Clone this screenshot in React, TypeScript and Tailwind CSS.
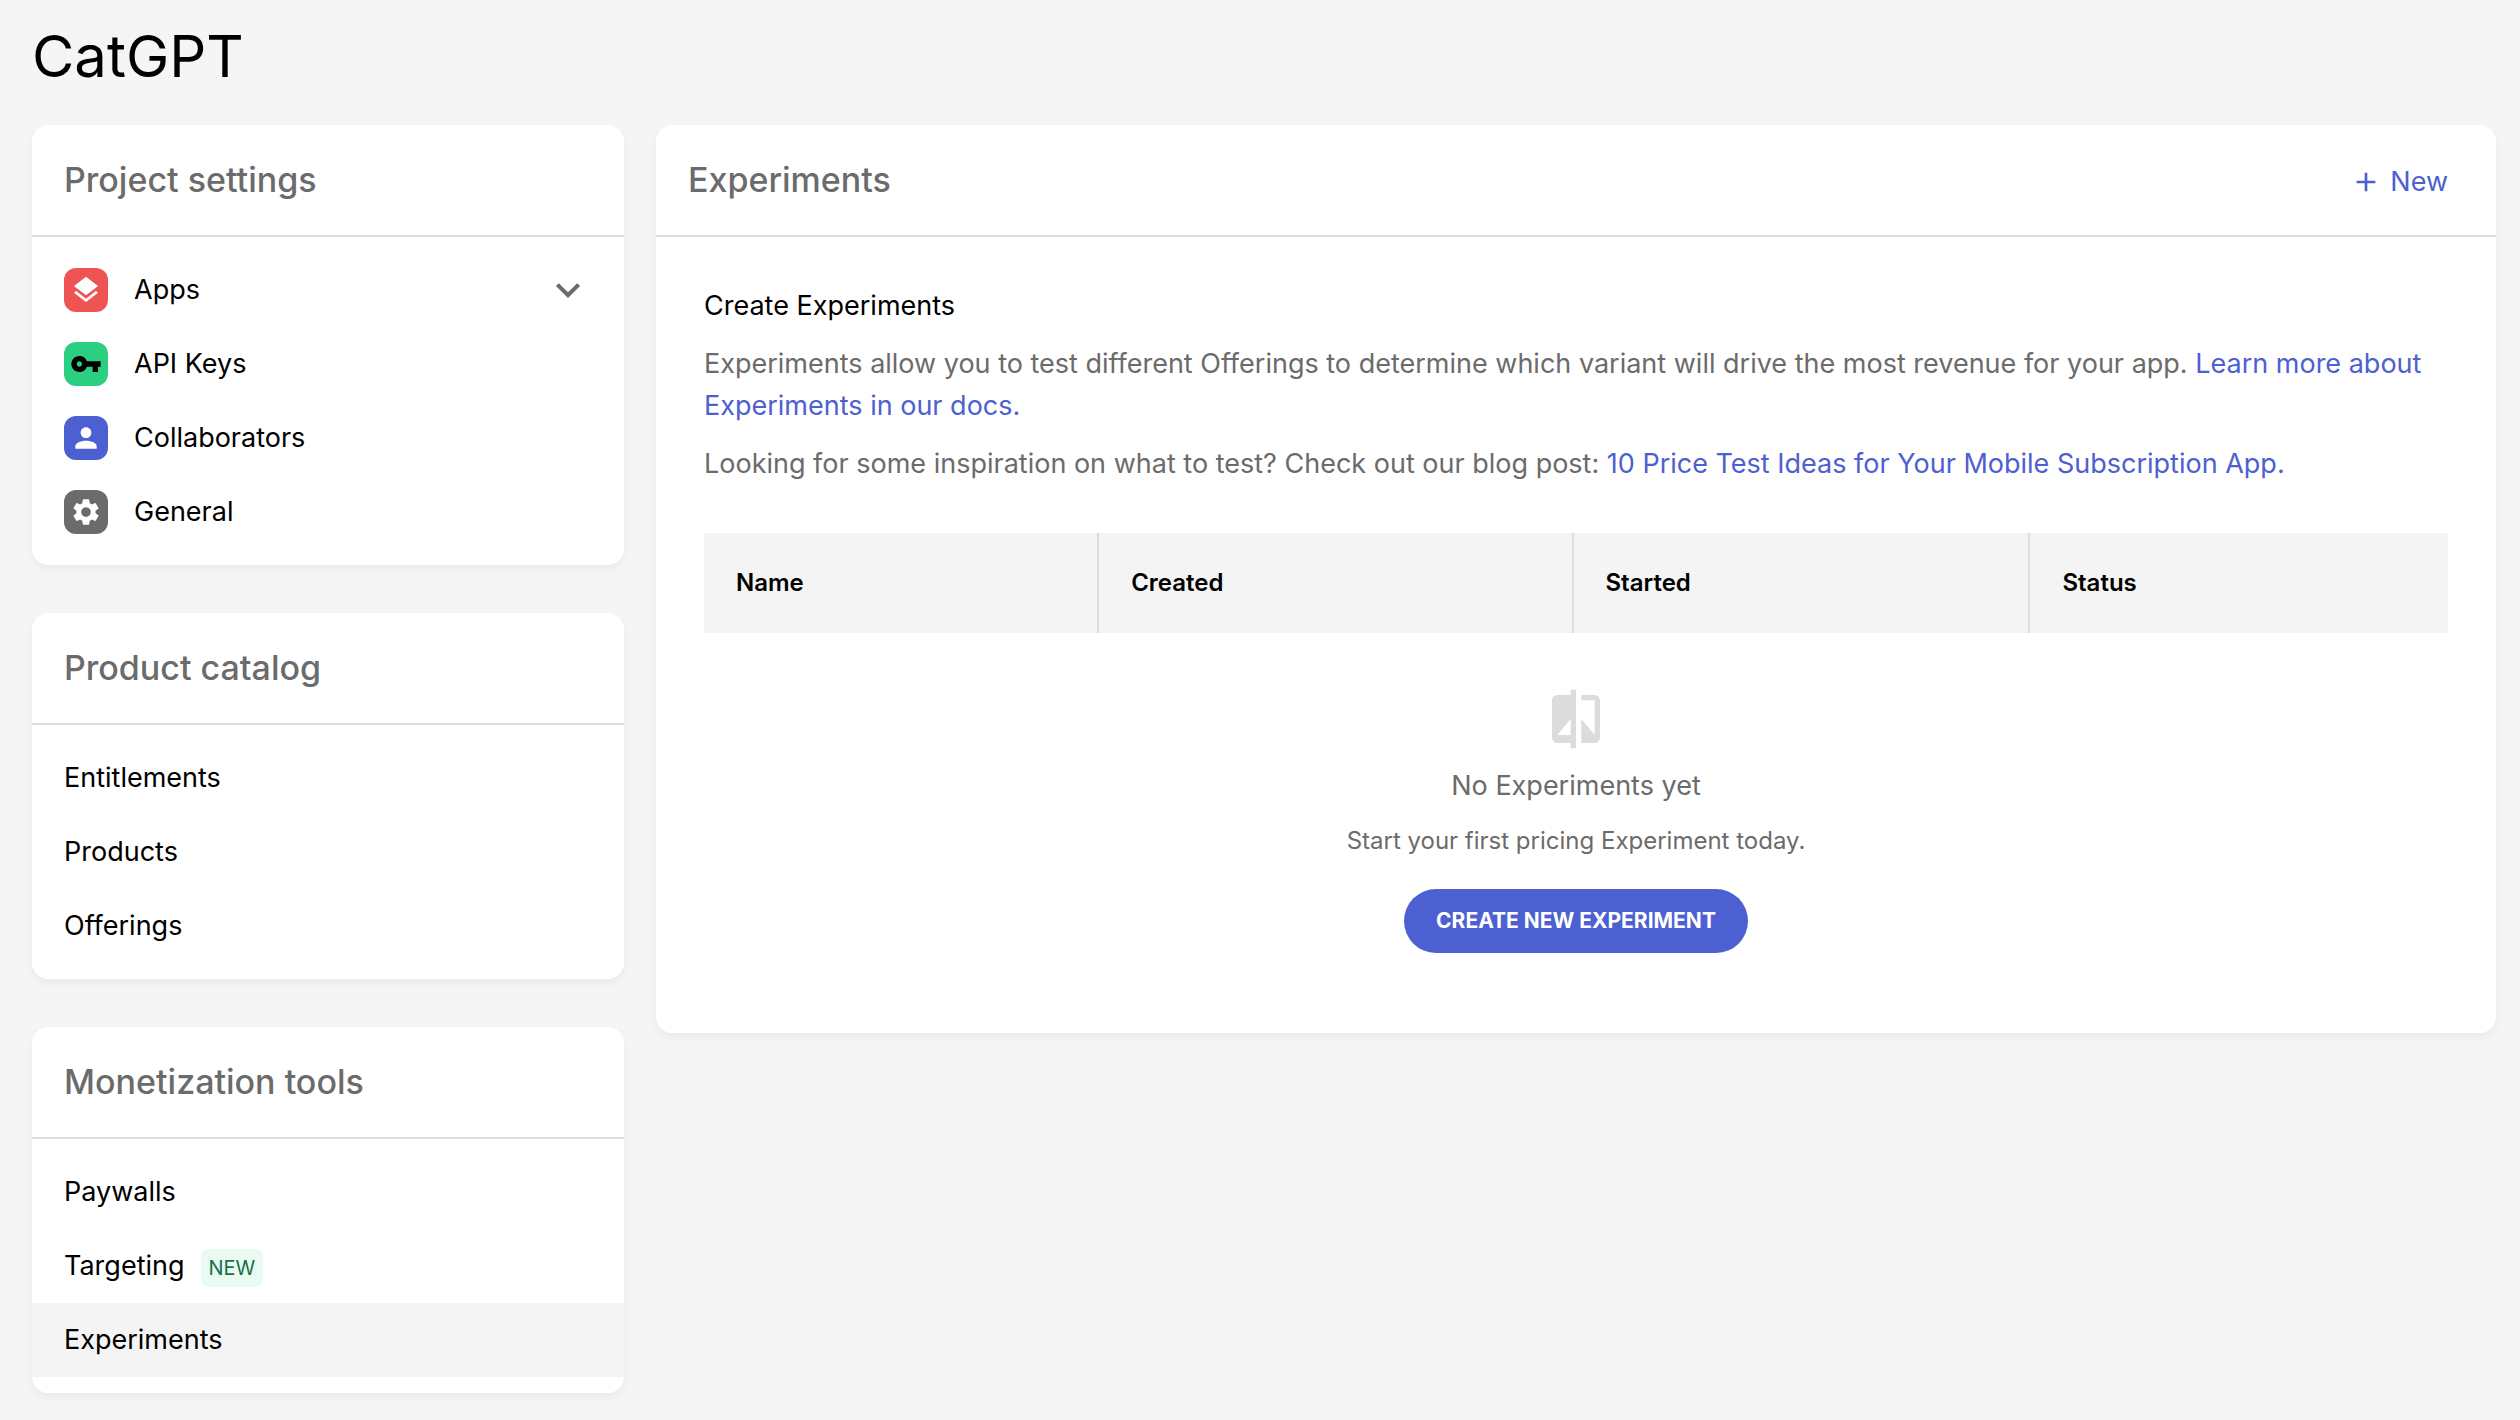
import type { ReactNode } from "react";
import {
  MdAdd,
  MdCompare,
  MdExpandMore,
  MdLayers,
  MdPerson,
  MdSettings,
  MdVpnKey,
} from "react-icons/md";

const settings = [
  { label: "Apps", icon: MdLayers, color: "bg-[#ef5454] text-white", expandable: true },
  { label: "API Keys", icon: MdVpnKey, color: "bg-[#2bcf81] text-black" },
  { label: "Collaborators", icon: MdPerson, color: "bg-[#4d60d1] text-white" },
  { label: "General", icon: MdSettings, color: "bg-[#6b6b6b] text-white" },
];

const catalog = [
  { label: "Entitlements" },
  { label: "Products" },
  { label: "Offerings" },
];

const tools = [
  { label: "Paywalls" },
  { label: "Targeting", badge: "NEW" },
  { label: "Experiments", active: true },
];

const columns = [
  { label: "Name", width: "w-[22.6%]" },
  { label: "Created", width: "w-[27.2%]" },
  { label: "Started", width: "w-[26.2%]" },
  { label: "Status", width: "w-[24%]" },
];

type Item = {
  label: string;
  icon?: typeof MdLayers;
  color?: string;
  badge?: string;
  active?: boolean;
  expandable?: boolean;
};

function Card({
  title,
  action,
  children,
}: {
  title: string;
  action?: ReactNode;
  children: ReactNode;
}) {
  return (
    <section className="rounded-2xl bg-white shadow-[0_4px_8px_rgba(0,0,0,0.05)]">
      <div className="flex h-28 items-center justify-between border-b-2 border-[#dedede] pr-12 pl-8">
        <h2 className="text-[34px] leading-10 font-medium text-[#6b6b6b]">{title}</h2>
        {action}
      </div>
      {children}
    </section>
  );
}

function NavCard({ title, items }: { title: string; items: Item[] }) {
  return (
    <Card title={title}>
      <ul className="py-4">
        {items.map((item) => (
          <li key={item.label}>
            <a
              href="#"
              className={`flex h-[74px] items-center px-8 ${item.active ? "bg-[#f4f4f4]" : ""}`}
            >
              {item.icon && (
                <span
                  className={`mr-[26px] flex size-11 items-center justify-center rounded-xl ${item.color}`}
                >
                  <item.icon className="size-8" />
                </span>
              )}
              {item.label}
              {item.badge && (
                <span className="mt-1 ml-4 rounded-lg bg-[#e9faf2] px-2 text-xl leading-[38px] text-[#18704a]">
                  {item.badge}
                </span>
              )}
              {item.expandable && (
                <MdExpandMore className="ml-auto size-12 text-[#6b6b6b]" />
              )}
            </a>
          </li>
        ))}
      </ul>
    </Card>
  );
}

export default function App() {
  return (
    <div className="min-h-screen bg-[#f5f5f5] pt-6 pr-6 pb-[27px] pl-8 font-['Inter',sans-serif] text-[27px] leading-[42px] text-black">
      <h1 className="mb-[37px] text-[58px] leading-[64px]">CatGPT</h1>

      <div className="flex items-start gap-8">
        <nav className="flex w-[592px] shrink-0 flex-col gap-12">
          <NavCard title="Project settings" items={settings} />
          <NavCard title="Product catalog" items={catalog} />
          <NavCard title="Monetization tools" items={tools} />
        </nav>

        <main className="min-w-0 flex-1">
          <Card
            title="Experiments"
            action={
              <button className="flex items-center gap-2 pt-1 text-[#4d60d1]">
                <MdAdd className="size-8" />
                New
              </button>
            }
          >
            <div className="p-12">
              <div className="mb-12 flex flex-col gap-4 text-[#6b6b6b]">
                <h3 className="text-black">Create Experiments</h3>
                <p>
                  Experiments allow you to test different Offerings to determine which
                  variant will drive the most revenue for your app.{" "}
                  <a href="#" className="text-[#4d60d1]">
                    Learn more about Experiments in our docs.
                  </a>
                </p>
                <p>
                  Looking for some inspiration on what to test? Check out our blog post:{" "}
                  <a href="#" className="text-[#4d60d1]">
                    10 Price Test Ideas for Your Mobile Subscription App.
                  </a>
                </p>
              </div>

              <table className="w-full table-fixed">
                <thead>
                  <tr className="h-[100px] divide-x-2 divide-[#dcdcdc] bg-[#f4f4f4] text-2xl">
                    {columns.map((col) => (
                      <th
                        key={col.label}
                        className={`px-8 text-left font-semibold ${col.width}`}
                      >
                        {col.label}
                      </th>
                    ))}
                  </tr>
                </thead>
              </table>

              <div className="flex flex-col items-center pt-[54px] pb-8 text-[#6b6b6b]">
                <MdCompare className="size-16 text-[#dcdcdc]" />
                <p className="mt-[14px]">No Experiments yet</p>
                <p className="mt-4 text-2xl leading-9">
                  Start your first pricing Experiment today.
                </p>
                <button className="mt-[30px] h-16 rounded-full bg-[#4d60d1] px-8 text-[21px] font-bold text-white">
                  CREATE NEW EXPERIMENT
                </button>
              </div>
            </div>
          </Card>
        </main>
      </div>
    </div>
  );
}
